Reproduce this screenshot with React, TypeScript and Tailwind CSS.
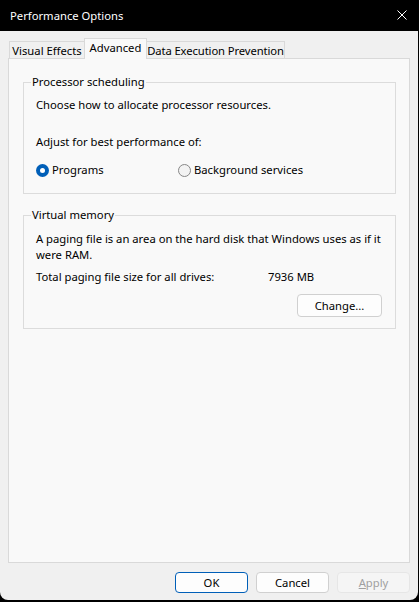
import React from "react";

function Radio({ checked, label }: { checked: boolean; label: string }) {
  return (
    <div className="flex items-center gap-[3px] h-[16px]">
      {checked ? (
        <span className="w-[13px] h-[13px] rounded-full bg-[#005fb8] flex items-center justify-center">
          <span className="w-[5px] h-[5px] rounded-full bg-white" />
        </span>
      ) : (
        <span className="w-[13px] h-[13px] rounded-full border border-[#878787] bg-[#f3f3f3]" />
      )}
      <span>{label}</span>
    </div>
  );
}

function Btn({ children, variant }: { children: React.ReactNode; variant?: "default" | "disabled" }) {
  const cls =
    variant === "default"
      ? "border-[#005fb8] bg-[#fdfdfd] text-black"
      : variant === "disabled"
      ? "border-[#e6e6e6] bg-[#f5f5f5] text-[#a0a0a0]"
      : "border-[#d0d0d0] bg-[#fdfdfd] text-black";
  return (
    <div className={`w-[73px] h-[21px] rounded-[4px] border flex items-center justify-center ${cls}`}>
      {children}
    </div>
  );
}

export default function App() {
  return (
    <div
      className="w-[419px] h-[602px] bg-black text-[11.25px] leading-[16px] text-black"
      style={{ fontFamily: '"Noto Sans", "Open Sans", sans-serif' }}
    >
      <div className="w-[418px] h-[600px] bg-[#f0f0f0] rounded-b-[8px] overflow-hidden flex flex-col">
        {/* Title bar */}
        <div className="h-[31px] bg-black flex items-center justify-between pl-[10px] pr-[11px] text-white">
          <span>Performance Options</span>
          <svg width="10" height="10" viewBox="0 0 10 10" className="mt-[-1px]">
            <path d="M0.5 0.5 L9.5 9.5 M9.5 0.5 L0.5 9.5" stroke="white" strokeWidth="1" />
          </svg>
        </div>

        {/* Tabs */}
        <div className="px-[8px] pt-[7px] flex flex-col">
          <div className="flex items-end h-[20px] pl-[1px] relative z-10 whitespace-nowrap">
            <div className="w-[76px] h-[17px] border border-b-0 border-[#d9d9d9] bg-[#f0f0f0] flex items-center justify-center pt-[1px]">
              Visual Effects
            </div>
            <div className="w-[63px] h-[21px] -ml-[1px] -mb-[1px] border border-b-0 border-[#d9d9d9] bg-[#f9f9f9] flex items-start justify-center pt-[1px]">
              Advanced
            </div>
            <div className="w-[139px] h-[17px] -ml-[1px] border border-b-0 border-[#d9d9d9] bg-[#f0f0f0] flex items-center justify-center pt-[1px] tracking-[-0.1px]">
              Data Execution Prevention
            </div>
          </div>

          {/* Panel */}
          <div className="h-[505px] border border-[#d9d9d9] bg-[#f9f9f9] pl-[14px] pr-[13px] pt-[15px]">
            <fieldset className="border border-[#dcdcdc] pl-[12px] pr-[12px] pb-[15px]">
              <legend className="-ml-[5px] px-[1px] leading-[16px]">Processor scheduling</legend>
              <div className="pt-[7px]">Choose how to allocate processor resources.</div>
              <div className="mt-[21px]">Adjust for best performance of:</div>
              <div className="mt-[12px] flex">
                <div className="w-[142px]">
                  <Radio checked label="Programs" />
                </div>
                <Radio checked={false} label="Background services" />
              </div>
            </fieldset>

            <fieldset className="mt-[13px] border border-[#dcdcdc] pl-[12px] pr-[13px] pb-[11px]">
              <legend className="-ml-[5px] px-[1px] leading-[16px]">Virtual memory</legend>
              <div className="pt-[8px] whitespace-nowrap">
                A paging file is an area on the hard disk that Windows uses as if it
                <br />
                were RAM.
              </div>
              <div className="mt-[6px] flex">
                <span className="w-[232px]">Total paging file size for all drives:</span>
                <span>7936 MB</span>
              </div>
              <div className="mt-[9px] flex justify-end">
                <div className="w-[85px] h-[23px] rounded-[4px] border border-[#d0d0d0] bg-[#fdfdfd] flex items-center justify-center">
                  Change...
                </div>
              </div>
            </fieldset>
          </div>
        </div>

        {/* Bottom buttons */}
        <div className="flex justify-end gap-[8px] pr-[8px] pt-[9px]">
          <Btn variant="default">OK</Btn>
          <Btn>Cancel</Btn>
          <Btn variant="disabled">
            <span>
              <u>A</u>pply
            </span>
          </Btn>
        </div>
      </div>
    </div>
  );
}
